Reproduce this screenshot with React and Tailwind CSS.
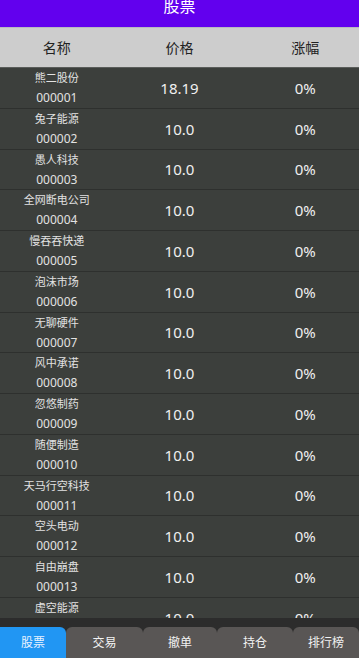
const STOCKS = [
  { name: "熊二股份", code: "000001", price: "18.19", pct: "0%" },
  { name: "兔子能源", code: "000002", price: "10.0", pct: "0%" },
  { name: "愚人科技", code: "000003", price: "10.0", pct: "0%" },
  { name: "全网断电公司", code: "000004", price: "10.0", pct: "0%" },
  { name: "慢吞吞快递", code: "000005", price: "10.0", pct: "0%" },
  { name: "泡沫市场", code: "000006", price: "10.0", pct: "0%" },
  { name: "无聊硬件", code: "000007", price: "10.0", pct: "0%" },
  { name: "风中承诺", code: "000008", price: "10.0", pct: "0%" },
  { name: "忽悠制药", code: "000009", price: "10.0", pct: "0%" },
  { name: "随便制造", code: "000010", price: "10.0", pct: "0%" },
  { name: "天马行空科技", code: "000011", price: "10.0", pct: "0%" },
  { name: "空头电动", code: "000012", price: "10.0", pct: "0%" },
  { name: "自由崩盘", code: "000013", price: "10.0", pct: "0%" },
  { name: "虚空能源", code: "000014", price: "10.0", pct: "0%" },
];

const TABS = [
  { label: "股票", w: "w-[66px]", active: true },
  { label: "交易", w: "w-[77px]" },
  { label: "撤单", w: "w-[74px]" },
  { label: "持仓", w: "w-[76px]" },
  { label: "排行榜", w: "flex-1" },
];

export default function App() {
  return (
    <div
      className="w-[359px] h-[658px] flex flex-col bg-[#2c2c2c] overflow-hidden"
      style={{ fontFamily: '"Noto Sans", "Noto Sans CJK SC", sans-serif' }}
    >
      {/* 标题栏 */}
      <div className="h-[27px] shrink-0 bg-[#6200ee] flex justify-center overflow-hidden">
        <span className="text-white text-[16px] leading-none -mt-[2px]">股票</span>
      </div>

      {/* 表头 */}
      <div className="h-[40px] shrink-0 bg-[#cdcdcd] border-t border-[#b9b9c0] grid grid-cols-3 items-center text-[#222] text-[14px]">
        <div className="text-center pr-[6px]">名称</div>
        <div className="text-center">价格</div>
        <div className="text-center pl-[12px]">涨幅</div>
      </div>

      {/* 列表 */}
      <div className="flex-1 overflow-hidden bg-[#3c3f3c] border-t border-[#5a5d5a]">
        {STOCKS.map((s) => (
          <div
            key={s.code}
            className="h-[40.75px] grid grid-cols-3 items-center border-b border-[#2e302e]"
          >
            <div className="flex flex-col items-center pr-[6px] leading-[20px]">
              <span className="text-[#e2e2e2] text-[11px]">{s.name}</span>
              <span className="text-[#e2e2e2] text-[12px]">{s.code}</span>
            </div>
            <div className="text-center text-[#f0f0f0] text-[15px]">{s.price}</div>
            <div className="text-center text-[#f0f0f0] text-[15px] pl-[12px]">{s.pct}</div>
          </div>
        ))}
      </div>

      {/* 底部导航 */}
      <div className="h-[9px] shrink-0 bg-[#2c2c2c]" />
      <div className="h-[31px] shrink-0 flex">
        {TABS.map((t) => (
          <div
            key={t.label}
            className={`${t.w} flex items-center justify-center text-[12px] ${
              t.active
                ? "bg-[#2196f3] text-[#e8f2ff] rounded-tr-[6px]"
                : "bg-[#595655] text-[#f2f2f2] rounded-t-[6px]"
            }`}
          >
            {t.label}
          </div>
        ))}
      </div>
    </div>
  );
}
